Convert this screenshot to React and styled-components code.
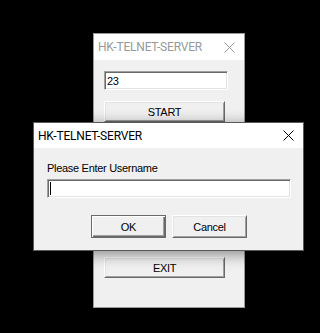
import React from "react";
import styled, { createGlobalStyle } from "styled-components";

const Global = createGlobalStyle`
  html, body { margin: 0; padding: 0; background: #000; }
  body { width: 320px; height: 333px; overflow: hidden; }
`;

const Desktop = styled.div`
  position: relative;
  width: 320px;
  height: 333px;
  background: #000;
  overflow: hidden;
`;

const Window = styled.div`
  position: absolute;
  left: ${(p) => p.$left}px;
  top: ${(p) => p.$top}px;
  width: ${(p) => p.$width}px;
  height: ${(p) => p.$height}px;
  box-sizing: border-box;
  border: 1px solid ${(p) => (p.$active ? "#5a5a5a" : "#9a9a9a")};
  background: #f0f0f0;
  display: flex;
  flex-direction: column;
  box-shadow: ${(p) => (p.$active ? "0 3px 14px rgba(0,0,0,0.45)" : "none")};
  z-index: ${(p) => (p.$active ? 2 : 1)};
`;

const TitleBar = styled.div`
  height: ${(p) => p.$h}px;
  flex: none;
  background: #fff;
  display: flex;
  align-items: center;
  justify-content: space-between;
  padding: 0 ${(p) => p.$pr}px 0 4px;
`;

const TitleText = styled.span`
  font-family: Roboto, "Liberation Sans", sans-serif;
  font-size: 12px;
  letter-spacing: -0.2px;
  color: ${(p) => (p.$active ? "#000" : "#999")};
  line-height: 14px;
`;

const CloseIcon = ({ color }) => (
  <svg width="11" height="11" viewBox="0 0 11 11">
    <path d="M0.5 0.5 L10.5 10.5 M10.5 0.5 L0.5 10.5" stroke={color} strokeWidth="1" fill="none" />
  </svg>
);

const Body = styled.div`
  flex: 1;
  display: flex;
  flex-direction: column;
  align-items: flex-start;
  padding: ${(p) => p.$pad};
`;

const Edit = styled.div`
  box-sizing: border-box;
  width: ${(p) => p.$w}px;
  height: 19px;
  margin-top: ${(p) => p.$mt || 0}px;
  background: #fff;
  border: 1px solid;
  border-color: #a0a0a0 #fff #fff #a0a0a0;
  box-shadow: inset 1px 1px #696969, inset -1px -1px #e3e3e3;
  display: flex;
  align-items: center;
  padding-left: 2px;
  font-family: "Liberation Sans", Arial, sans-serif;
  font-size: 11px;
  letter-spacing: -0.3px;
  color: #000;
`;

const Caret = styled.span`
  width: 1px;
  height: 13px;
  background: #000;
  margin-left: 0px;
`;

const Label = styled.div`
  font-family: "Liberation Sans", Arial, sans-serif;
  font-size: 11px;
  letter-spacing: -0.3px;
  line-height: 13px;
  color: #000;
`;

const Button = styled.button`
  box-sizing: border-box;
  width: ${(p) => p.$w}px;
  height: ${(p) => p.$h}px;
  margin: 0;
  margin-top: ${(p) => p.$mt || 0}px;
  padding: 0;
  background: #f0f0f0;
  font-family: "Liberation Sans", Arial, sans-serif;
  font-size: 11px;
  letter-spacing: -0.3px;
  color: #000;
  border: 1px solid;
  border-color: ${(p) => (p.$default ? "#6b6b6b" : "#fff #696969 #696969 #fff")};
  box-shadow: ${(p) =>
    p.$default
      ? "inset 1px 1px #fff, inset -1px -1px #696969, inset -2px -2px #a0a0a0"
      : "inset 1px 1px #e3e3e3, inset -1px -1px #a0a0a0"};
  display: flex;
  align-items: center;
  justify-content: center;
  outline: none;
`;

const ButtonRow = styled.div`
  align-self: stretch;
  display: flex;
  justify-content: center;
  gap: 6px;
  margin-top: 17px;
`;

export default function App() {
  return (
    <>
      <Global />
      <Desktop>
        <Window $left={93} $top={33} $width={152} $height={275}>
          <TitleBar $h={26} $pr={9}>
            <TitleText>HK-TELNET-SERVER</TitleText>
            <CloseIcon color="#9a9a9a" />
          </TitleBar>
          <Body $pad="11px 0 0 10px">
            <Edit $w={124}>23</Edit>
            <Button $w={121} $h={21} $mt={11}>START</Button>
            <Button $w={121} $h={21} $mt={135}>EXIT</Button>
          </Body>
        </Window>

        <Window $active $left={33} $top={122} $width={271} $height={129}>
          <TitleBar $h={25} $pr={9}>
            <TitleText $active>HK-TELNET-SERVER</TitleText>
            <CloseIcon color="#000" />
          </TitleBar>
          <Body $pad="14px 12px 0 13px">
            <Label>Please Enter Username</Label>
            <Edit $w={244} $mt={4}>
              <Caret />
            </Edit>
            <ButtonRow>
              <Button $default $w={75} $h={23}>OK</Button>
              <Button $w={75} $h={23}>Cancel</Button>
            </ButtonRow>
          </Body>
        </Window>
      </Desktop>
    </>
  );
}
